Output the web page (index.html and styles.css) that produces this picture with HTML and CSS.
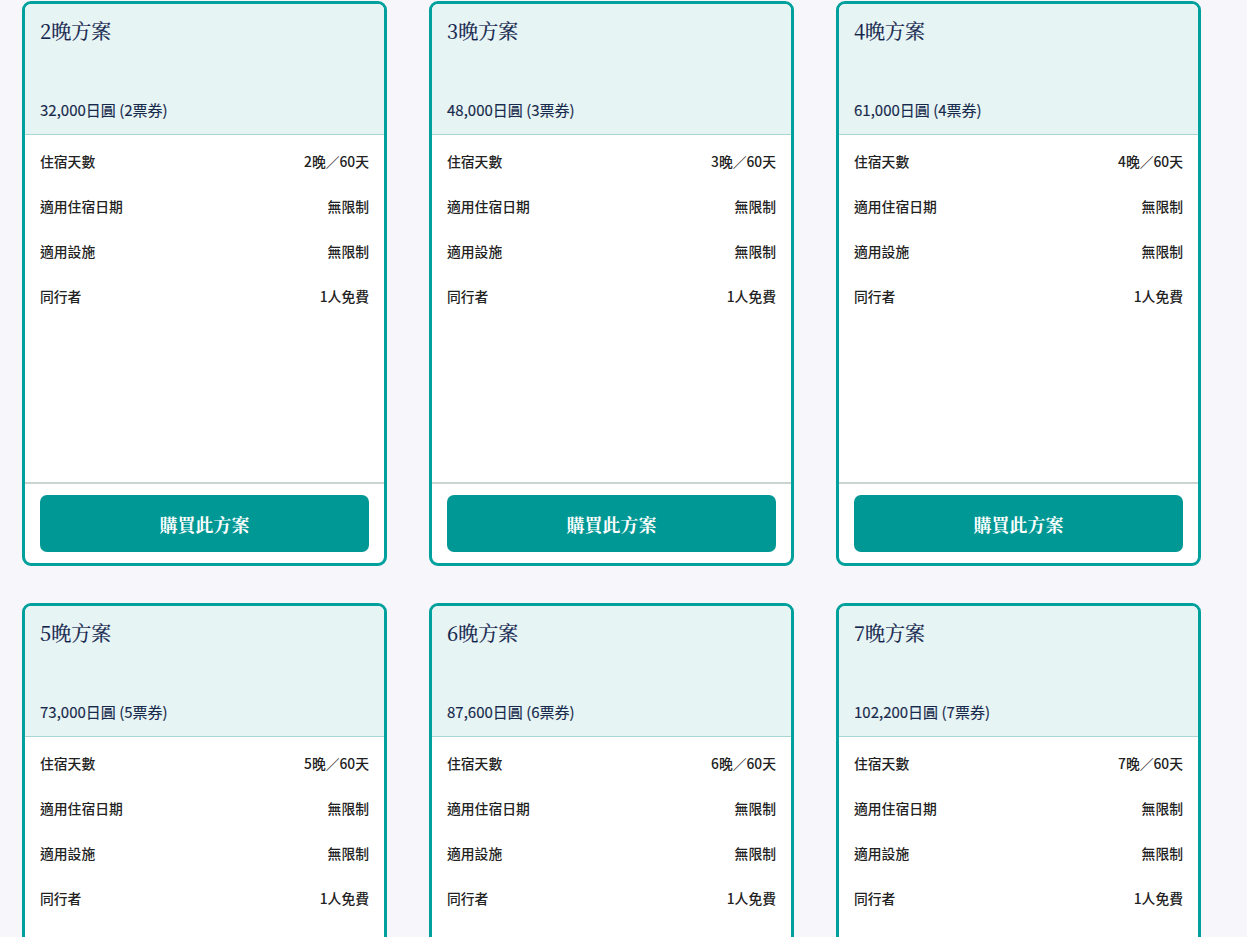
FILE: index.html
```html
<!DOCTYPE html>
<html lang="zh-Hant">
<head>
<meta charset="utf-8">
<title>方案</title>
<link rel="stylesheet" href="styles.css">
</head>
<body>
<div class="grid">
  <div class="card">
    <div class="head"><div class="title">2晚方案</div><div class="price">32,000日圓 (2票券)</div></div>
    <div class="body">
      <div class="row"><span>住宿天數</span><span>2晚／60天</span></div>
      <div class="row"><span>適用住宿日期</span><span>無限制</span></div>
      <div class="row"><span>適用設施</span><span>無限制</span></div>
      <div class="row"><span>同行者</span><span>1人免費</span></div>
    </div>
    <div class="foot"><button class="buy">購買此方案</button></div>
  </div>
  <div class="card">
    <div class="head"><div class="title">3晚方案</div><div class="price">48,000日圓 (3票券)</div></div>
    <div class="body">
      <div class="row"><span>住宿天數</span><span>3晚／60天</span></div>
      <div class="row"><span>適用住宿日期</span><span>無限制</span></div>
      <div class="row"><span>適用設施</span><span>無限制</span></div>
      <div class="row"><span>同行者</span><span>1人免費</span></div>
    </div>
    <div class="foot"><button class="buy">購買此方案</button></div>
  </div>
  <div class="card">
    <div class="head"><div class="title">4晚方案</div><div class="price">61,000日圓 (4票券)</div></div>
    <div class="body">
      <div class="row"><span>住宿天數</span><span>4晚／60天</span></div>
      <div class="row"><span>適用住宿日期</span><span>無限制</span></div>
      <div class="row"><span>適用設施</span><span>無限制</span></div>
      <div class="row"><span>同行者</span><span>1人免費</span></div>
    </div>
    <div class="foot"><button class="buy">購買此方案</button></div>
  </div>
  <div class="card">
    <div class="head"><div class="title">5晚方案</div><div class="price">73,000日圓 (5票券)</div></div>
    <div class="body">
      <div class="row"><span>住宿天數</span><span>5晚／60天</span></div>
      <div class="row"><span>適用住宿日期</span><span>無限制</span></div>
      <div class="row"><span>適用設施</span><span>無限制</span></div>
      <div class="row"><span>同行者</span><span>1人免費</span></div>
    </div>
    <div class="foot"><button class="buy">購買此方案</button></div>
  </div>
  <div class="card">
    <div class="head"><div class="title">6晚方案</div><div class="price">87,600日圓 (6票券)</div></div>
    <div class="body">
      <div class="row"><span>住宿天數</span><span>6晚／60天</span></div>
      <div class="row"><span>適用住宿日期</span><span>無限制</span></div>
      <div class="row"><span>適用設施</span><span>無限制</span></div>
      <div class="row"><span>同行者</span><span>1人免費</span></div>
    </div>
    <div class="foot"><button class="buy">購買此方案</button></div>
  </div>
  <div class="card">
    <div class="head"><div class="title">7晚方案</div><div class="price">102,200日圓 (7票券)</div></div>
    <div class="body">
      <div class="row"><span>住宿天數</span><span>7晚／60天</span></div>
      <div class="row"><span>適用住宿日期</span><span>無限制</span></div>
      <div class="row"><span>適用設施</span><span>無限制</span></div>
      <div class="row"><span>同行者</span><span>1人免費</span></div>
    </div>
    <div class="foot"><button class="buy">購買此方案</button></div>
  </div>
</div>
</body>
</html>
```
FILE: styles.css
```css
html, body {
  margin: 0;
  padding: 0;
  background: #f7f7fb;
}
body {
  font-family: "Noto Sans CJK TC", "Noto Sans", sans-serif;
}
.grid {
  display: grid;
  grid-template-columns: repeat(3, 365px);
  column-gap: 42px;
  row-gap: 37px;
  padding: 1px 0 0 22px;
}
.card {
  box-sizing: border-box;
  height: 565px;
  border: 3px solid #00a09d;
  border-radius: 9px;
  background: #fff;
  display: flex;
  flex-direction: column;
  overflow: hidden;
}
.head {
  box-sizing: border-box;
  height: 131px;
  background: #e7f4f4;
  border-bottom: 1px solid #a9d5d5;
  padding: 12px 15px 14px;
  display: flex;
  flex-direction: column;
  justify-content: space-between;
}
.title {
  font-family: "Noto Serif CJK TC", "Liberation Serif", serif;
  font-size: 20px;
  line-height: 30px;
  color: #13244c;
  -webkit-text-stroke: 0.2px #13244c;
}
.price {
  font-size: 15px;
  line-height: 20px;
  font-weight: 400;
  color: #172a4c;
  -webkit-text-stroke: 0.15px #172a4c;
}
.body {
  flex: 1;
  padding: 3px 15px 0;
}
.row {
  height: 45px;
  display: flex;
  justify-content: space-between;
  align-items: center;
  font-size: 13.8px;
  font-weight: 500;
  color: #222;
}
.foot {
  border-top: 2px solid #cbd3d3;
  padding: 11px 15px 11px;
}
.buy {
  display: block;
  width: 100%;
  height: 57px;
  border: none;
  border-radius: 7px;
  background: #009894;
  color: #fff;
  font-family: "Noto Serif CJK TC", "Liberation Serif", serif;
  font-size: 18px;
  font-weight: 700;
  cursor: pointer;
}
```
